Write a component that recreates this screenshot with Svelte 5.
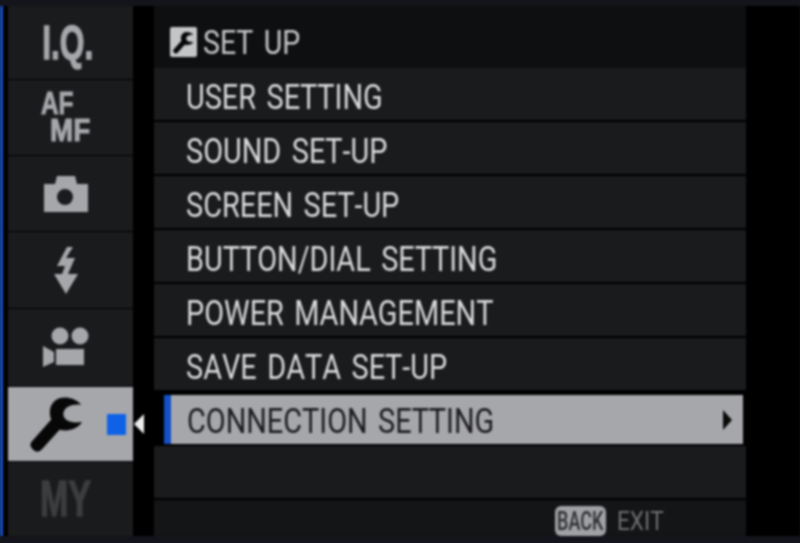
<script>
  const tabs = [
    { id: "iq" }, { id: "af" }, { id: "camera" }, { id: "flash" }, { id: "video" }, { id: "wrench" }, { id: "my" }
  ];
  const items = [
    "USER SETTING", "SOUND SET-UP", "SCREEN SET-UP", "BUTTON/DIAL SETTING",
    "POWER MANAGEMENT", "SAVE DATA SET-UP", "CONNECTION SETTING"
  ];
  const activeItem = 6;
  const wrench = "M160 30 C130 0 78 -2 64 38 C60 52 62 66 66 76 L5 145 C-3 155 3 165 12 172 C22 180 30 176 38 168 L92 108 C120 114 148 106 162 84 C140 88 118 84 108 72 C100 60 104 44 118 36 C130 30 146 28 160 30Z";
</script>

<div class="screen">
  <div class="stage">
    <div class="accent"></div>
    <nav class="tabs">
      {#each tabs as tab}
        <div class="tab" class:on={tab.id === "wrench"}>
          {#if tab.id === "iq"}
            <span class="iq">I.Q.</span>
          {:else if tab.id === "af"}
            <span class="af"><span class="afl">AF</span><span class="mf">MF</span></span>
          {:else if tab.id === "camera"}
            <svg width="44" height="37" viewBox="0 0 44 37">
              <path fill-rule="evenodd" fill="#a6a7ab" d="M0 9H11L13 1H31L33 9H44V37H0ZM21 14A8 8 0 1 0 21 30A8 8 0 1 0 21 14Z" />
            </svg>
          {:else if tab.id === "flash"}
            <svg width="26" height="47" viewBox="0 0 26 47">
              <path fill="#a6a7ab" d="M14 0H20L13 11H22L15 27H25L13 47L1 27H9L12 19H4Z" />
            </svg>
          {:else if tab.id === "video"}
            <svg width="46" height="41" viewBox="0 0 46 41">
              <circle cx="17" cy="9" r="8.5" fill="#a6a7ab" />
              <circle cx="37" cy="9" r="8.5" fill="#a6a7ab" />
              <path fill="#a6a7ab" d="M13 22H41V38H13ZM0 19L11 25V35L0 40Z" />
            </svg>
          {:else if tab.id === "wrench"}
            <svg width="53" height="58" viewBox="0 0 165 180">
              <path fill="#070707" d={wrench} />
            </svg>
            <span class="square"></span>
          {:else}
            <span class="my">MY</span>
          {/if}
        </div>
      {/each}
    </nav>
    <div class="pointer"></div>
    <main class="menu">
      <header class="head">
        <span class="badge">
          <svg width="21" height="23" viewBox="0 0 165 180">
            <path fill="#070707" d={wrench} />
          </svg>
        </span>
        <span class="squeeze title">SET UP</span>
      </header>
      {#each items as item, i}
        <div class="row" class:active={i === activeItem}>
          <span class="squeeze">{item}</span>
          {#if i === activeItem}<span class="arrow"></span>{/if}
        </div>
      {/each}
      <div class="row blank"></div>
      <footer class="foot">
        <span class="back"><span class="backtext">BACK</span></span>
        <span class="exit">EXIT</span>
      </footer>
    </main>
  </div>
</div>

<style>
  :global(body) {
    margin: 0;
    background: #000;
  }

  .screen {
    width: 800px;
    height: 543px;
    padding: 6px 0 7px;
    box-sizing: border-box;
    background: #14141c;
    overflow: hidden;
    font-family: "Roboto", "Liberation Sans", sans-serif;
    font-kerning: none;
  }

  .stage {
    display: flex;
    height: 530px;
    background: #000;
    filter: blur(0.8px);
  }

  .accent {
    width: 3px;
    background: #1450c8;
    margin-right: 5px;
  }

  .tabs {
    width: 125px;
    display: grid;
    grid-template-rows: 73px 75px 75px 76px 77px 74px 1fr;
    gap: 1px;
  }

  .tab {
    display: flex;
    align-items: center;
    justify-content: center;
    padding-right: 10px;
    background: #1a1b1c;
    color: #a6a7ab;
    position: relative;
  }

  .tab.on {
    background: #a6a7ab;
    justify-content: flex-start;
    padding: 0 0 0 22px;
  }

  .iq {
    font: bold 48px "Liberation Sans", sans-serif;
    -webkit-text-stroke: 1.5px #a6a7ab;
    transform: scaleX(0.66);
    margin-left: 4px;
  }

  .af {
    display: flex;
    flex-direction: column;
    font: bold 32px/27px "Liberation Sans", sans-serif;
    -webkit-text-stroke: 1px #a6a7ab;
    width: 50px;
    margin-top: -2px;
  }

  .afl {
    display: inline-block;
    transform: scaleX(0.76);
    transform-origin: left;
  }

  .mf {
    display: inline-block;
    transform: scaleX(0.87);
    transform-origin: left;
    margin-left: 9px;
  }

  .my {
    font: bold 50px "Liberation Sans", sans-serif;
    color: #3c3d3e;
    -webkit-text-stroke: 1.5px #3c3d3e;
    transform: scaleX(0.68);
  }

  .square {
    position: absolute;
    left: 99px;
    top: 27px;
    width: 19px;
    height: 21px;
    background: #0f62e6;
  }

  .pointer {
    width: 0;
    height: 0;
    margin: 408px 10px 0 1px;
    border-top: 10px solid transparent;
    border-bottom: 10px solid transparent;
    border-right: 10px solid #eee;
    align-self: flex-start;
  }

  .menu {
    width: 592px;
    display: flex;
    flex-direction: column;
  }

  .head {
    flex: none;
    height: 62px;
    display: flex;
    align-items: center;
    gap: 6px;
    padding: 10px 0 0 16px;
    background: #0e0f10;
    color: #c6c7c9;
    font-size: 34px;
    box-sizing: border-box;
  }

  .badge {
    width: 27px;
    height: 30px;
    background: #c4c5c7;
    display: flex;
    align-items: center;
    justify-content: center;
    border-radius: 2px;
  }

  .squeeze {
    display: inline-block;
    white-space: nowrap;
    word-spacing: 4px;
    transform: scaleX(0.825);
    transform-origin: left;
  }

  .title {
    transform: scaleX(0.84);
  }

  .row {
    flex: none;
    height: 52px;
    margin-bottom: 2px;
    display: flex;
    align-items: center;
    justify-content: space-between;
    padding: 6px 0 0 32px;
    background: #1a1b1c;
    color: #d8d9da;
    font-size: 35px;
    box-sizing: border-box;
  }

  .row.active {
    height: 49px;
    margin: 3px 3px 2px 10px;
    padding: 3px 11px 0 16px;
    background: #a6a7ab;
    border-left: 7px solid #1450c8;
    color: #1c1c1e;
  }

  .arrow {
    border-top: 10px solid transparent;
    border-bottom: 10px solid transparent;
    border-left: 9px solid #0a0a0a;
    margin-top: -3px;
  }

  .foot {
    flex: 1;
    display: flex;
    align-items: center;
    gap: 11px;
    padding: 6px 0 0 401px;
    background: #141516;
    box-sizing: border-box;
  }

  .back {
    width: 51px;
    height: 30px;
    display: flex;
    align-items: center;
    justify-content: center;
    background: #a0a1a4;
    color: #2e2f31;
    font-size: 25px;
    font-weight: 500;
    border-radius: 6px;
    box-sizing: border-box;
  }

  .backtext {
    transform: scaleX(0.72);
  }

  .exit {
    color: #6e6f71;
    font-size: 26px;
    display: inline-block;
    transform: scaleX(0.87);
    transform-origin: left;
  }
</style>
